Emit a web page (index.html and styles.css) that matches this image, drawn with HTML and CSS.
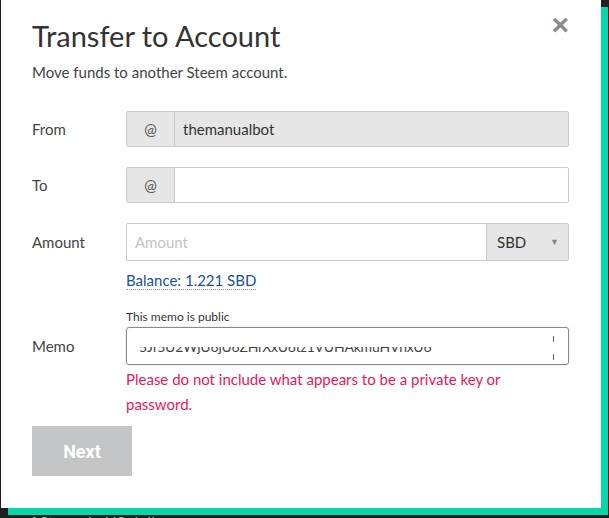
FILE: index.html
```html
<!DOCTYPE html>
<html>
<head>
<meta charset="utf-8">
<link rel="stylesheet" href="styles.css">
</head>
<body>
<div class="modal">
  <button class="close" aria-label="Close">&times;</button>
  <h1 class="title">Transfer to Account</h1>
  <p class="subtitle">Move funds to another Steem account.</p>
  <div class="form">
    <div class="row">
      <div class="label">From</div>
      <div class="group disabled">
        <span class="addon">@</span>
        <span class="value">themanualbot</span>
      </div>
    </div>

    <div class="row">
      <div class="label">To</div>
      <div class="group">
        <span class="addon">@</span>
        <span class="value"></span>
      </div>
    </div>

    <div class="row">
      <div class="label">Amount</div>
      <div class="group tall">
        <span class="value placeholder">Amount</span>
        <span class="select">SBD<span class="arrow">&#9660;</span></span>
      </div>
    </div>

    <div class="field-only balance-row"><span class="balance">Balance: 1.221 SBD</span></div>

    <div class="field-only note">This memo is public</div>

    <div class="row">
      <div class="label">Memo</div>
      <div class="memo">
        <div class="memo-clip"><span class="memo-text">5Jf5U2WjU6jU6ZHrXxU6tz1VUHAkmuHVhxU6</span></div>
        <span class="ticks"></span>
      </div>
    </div>

    <div class="field-only error">Please do not include what appears to be a private key or password.</div>
  </div>
  <button class="next">Next</button>
</div>
<div class="behind">ue of Steem in US dollars</div>
</body>
</html>
```

FILE: styles.css
```css
* { box-sizing: border-box; }
html, body { margin: 0; padding: 0; }
body {
  background: #1e1e1e;
  font-family: "Lato", "Noto Sans", sans-serif;
  color: #333;
  overflow: hidden;
  height: 518px;
}
.modal {
  position: relative;
  z-index: 1;
  margin-left: 1px;
  width: 600px;
  height: 508px;
  background: #fff;
  box-shadow: 7px 7px 0 #06d6a9;
  padding: 18px 0 0 31px;
}
.close {
  position: absolute;
  top: 12px;
  right: 32px;
  border: 0;
  background: none;
  padding: 0;
  font-family: "Liberation Sans", sans-serif;
  font-size: 30px;
  line-height: 26px;
  font-weight: bold;
  color: #8a8a8a;
}
.title {
  margin: 0;
  font-weight: 400;
  font-size: 29px;
  line-height: 36px;
  color: #333;
}
.subtitle {
  margin: 8px 0 0;
  font-size: 15px;
  line-height: 20px;
  color: #444;
}
.form {
  margin-top: 29px;
}
.row {
  display: grid;
  grid-template-columns: 94px 443px;
  align-items: center;
}
.label {
  font-size: 15px;
  color: #444;
}
.group {
  display: flex;
  height: 36px;
  border: 1px solid #cacaca;
  border-radius: 2px;
  overflow: hidden;
  background: #fff;
}
.row + .row { margin-top: 20px; }
.group.tall { height: 38px; }
.addon {
  width: 48px;
  flex: none;
  background: #e6e6e6;
  border-right: 1px solid #cacaca;
  display: flex;
  align-items: center;
  justify-content: center;
  font-size: 15px;
  color: #555;
}
.value {
  flex: 1;
  display: flex;
  align-items: center;
  padding-left: 8px;
  font-size: 15px;
  color: #333;
}
.disabled .value { background: #e6e6e6; }
.placeholder { color: #c4c4c4; }
.select {
  width: 82px;
  flex: none;
  background: #e6e6e6;
  border-left: 1px solid #cacaca;
  display: flex;
  align-items: center;
  padding-left: 10px;
  font-size: 15px;
  color: #333;
  position: relative;
}
.arrow {
  position: absolute;
  right: 9px;
  top: 12px;
  font-size: 9px;
  color: #888;
}
.field-only { margin-left: 94px; width: 443px; }
.balance-row {
  margin-top: 9px;
  line-height: 20px;
  height: 39px;
}
.balance {
  font-size: 15px;
  color: #1a5099;
  border-bottom: 1px dotted #999;
}
.note {
  font-size: 12px;
  line-height: 16px;
  color: #333;
  margin-bottom: 2px;
}
.memo {
  position: relative;
  height: 38px;
  border: 1px solid #8a8a8a;
  border-radius: 3px;
  box-shadow: 0 0 2px #ccc;
  padding: 19px 0 0 12px;
}
.memo-clip {
  height: 8px;
  width: 300px;
  overflow: hidden;
}
.memo-text {
  display: block;
  margin-top: -8px;
  font-size: 14px;
  line-height: 16px;
  letter-spacing: -0.2px;
  color: #444;
}
.ticks {
  position: absolute;
  right: 14px;
  top: 8px;
  width: 1px;
  height: 24px;
  background: linear-gradient(#666 0 6px, transparent 6px 18px, #666 18px 24px);
}
.error {
  margin-top: 2px;
  font-size: 15px;
  line-height: 25px;
  color: #e8175d;
  width: 400px;
}
.next {
  display: block;
  margin-top: 9px;
  width: 100px;
  height: 50px;
  border: 0;
  background: #c4c5c7;
  color: #fff;
  font-family: "Roboto", sans-serif;
  font-weight: bold;
  font-size: 18px;
  padding: 0;
}
.behind {
  margin-top: 0;
  padding-top: 4px;
  font-size: 16px;
  color: #aaa;
  white-space: nowrap;
}
```
